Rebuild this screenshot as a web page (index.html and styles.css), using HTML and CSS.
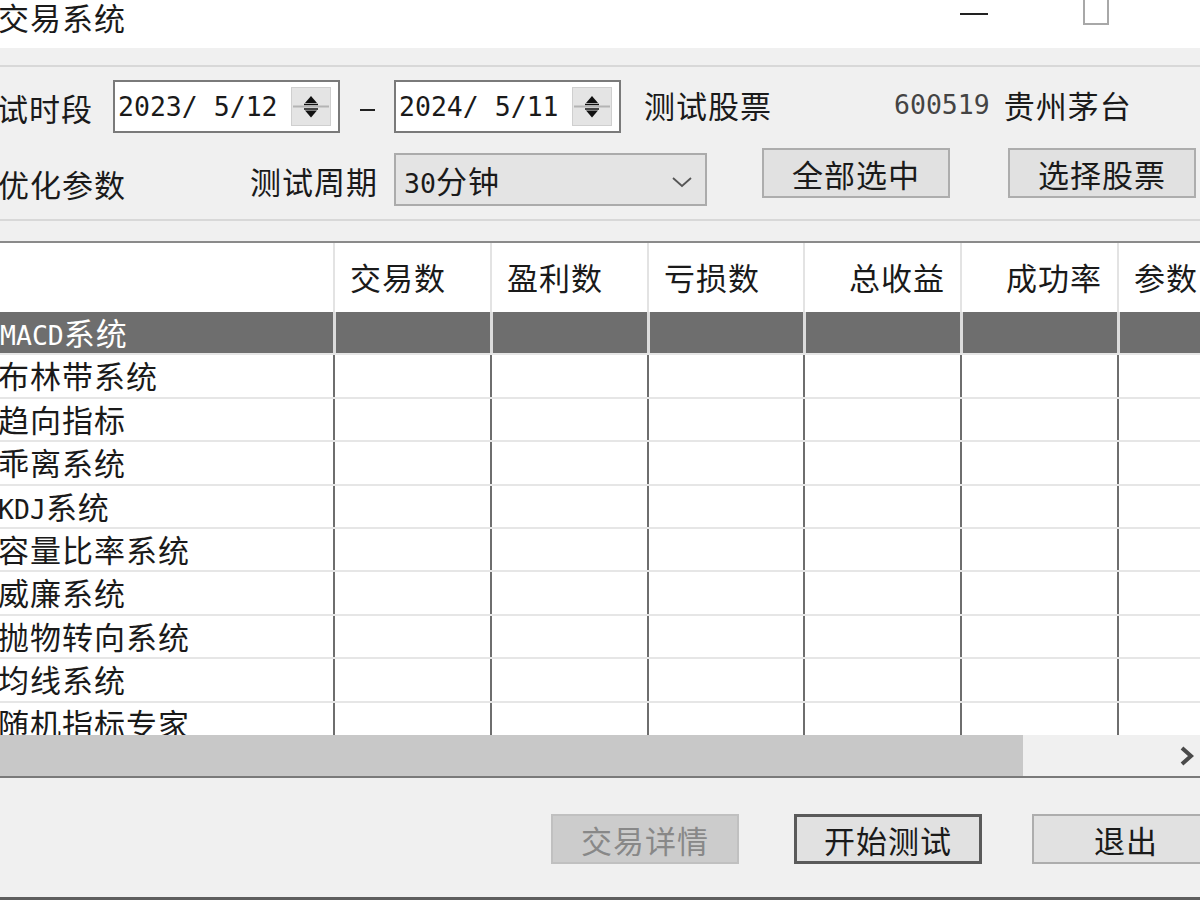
FILE: index.html
```html
<!DOCTYPE html>
<html lang="zh-CN">
<head>
    <meta charset="UTF-8">
    <title>交易系统</title>
    <link rel="stylesheet" href="styles.css">
</head>
<body>
    <div class="window">
        <div class="titlebar">
            <span class="title">交易系统</span>
            <span class="btn-min"></span>
            <span class="btn-max"></span>
        </div>

        <div class="content">
            <!-- settings group -->
            <div class="group">
                <div class="form-row row-dates">
                    <span class="label label-period">测试时段</span>
                    <div class="datebox">
                        <span class="mono">2023/ 5/12</span>
                        <span class="spin">
                            <svg width="38" height="37" viewBox="0 0 38 37">
                                <polygon points="19,8 13,15 25,15" fill="#111"/>
                                <line x1="12" y1="16.5" x2="26" y2="16.5" stroke="#111" stroke-width="1.5"/>
                                <line x1="1" y1="18.5" x2="37" y2="18.5" stroke="#b4b4b4" stroke-width="2"/>
                                <line x1="12" y1="21" x2="26" y2="21" stroke="#111" stroke-width="1.5"/>
                                <polygon points="13,22.5 25,22.5 19,29.5" fill="#111"/>
                            </svg>
                        </span>
                    </div>
                    <span class="dash"></span>
                    <div class="datebox">
                        <span class="mono">2024/ 5/11</span>
                        <span class="spin">
                            <svg width="38" height="37" viewBox="0 0 38 37">
                                <polygon points="19,8 13,15 25,15" fill="#111"/>
                                <line x1="12" y1="16.5" x2="26" y2="16.5" stroke="#111" stroke-width="1.5"/>
                                <line x1="1" y1="18.5" x2="37" y2="18.5" stroke="#b4b4b4" stroke-width="2"/>
                                <line x1="12" y1="21" x2="26" y2="21" stroke="#111" stroke-width="1.5"/>
                                <polygon points="13,22.5 25,22.5 19,29.5" fill="#111"/>
                            </svg>
                        </span>
                    </div>
                    <span class="label label-stock">测试股票</span>
                    <span class="stock"><span class="mono code">600519</span><span class="stock-name">贵州茅台</span></span>
                </div>

                <div class="form-row row-options">
                    <span class="label label-opt">优化参数</span>
                    <span class="label label-cycle">测试周期</span>
                    <div class="combo">
                        <span><span class="mono">30</span>分钟</span>
                        <svg width="22" height="14" viewBox="0 0 22 14">
                            <polyline points="2,3 11,11 20,3" fill="none" stroke="#555" stroke-width="1.8"/>
                        </svg>
                    </div>
                    <button class="btn btn-all">全部选中</button>
                    <button class="btn btn-pick">选择股票</button>
                </div>
            </div>

            <!-- systems list -->
            <div class="list">
                <div class="grid head">
                    <div class="cell first"></div>
                    <div class="cell">交易数</div>
                    <div class="cell">盈利数</div>
                    <div class="cell">亏损数</div>
                    <div class="cell right">总收益</div>
                    <div class="cell right">成功率</div>
                    <div class="cell">参数</div>
                </div>
                <div class="rows" id="rows"></div>
                <div class="hscroll">
                    <div class="thumb"></div>
                    <svg class="arrow" width="18" height="22" viewBox="0 0 18 22">
                        <polyline points="4,3 13,11 4,19" fill="none" stroke="#4a4a4a" stroke-width="4"/>
                    </svg>
                </div>
            </div>

            <div class="actions">
                <button class="btn btn-detail" disabled>交易详情</button>
                <button class="btn btn-start">开始测试</button>
                <button class="btn btn-exit">退出</button>
            </div>
        </div>
    </div>

    <script>
        // trading systems shown in the list
        const systems = [
            '<span class="mono">MACD</span>系统',
            '布林带系统',
            '趋向指标',
            '乖离系统',
            '<span class="mono">KDJ</span>系统',
            '容量比率系统',
            '威廉系统',
            '抛物转向系统',
            '均线系统',
            '随机指标专家'
        ];

        const rowsEl = document.getElementById('rows');

        systems.forEach((name, i) => {
            const row = document.createElement('div');
            row.className = 'grid row' + (i === 0 ? ' sel' : '');
            let html = `<div class="cell first">${name}</div>`;
            for (let c = 0; c < 6; c++) {
                html += '<div class="cell"></div>';
            }
            row.innerHTML = html;
            rowsEl.appendChild(row);
        });
    </script>
</body>
</html>
```

FILE: styles.css
```css
* {
    box-sizing: border-box;
}

body {
    margin: 0;
    width: 1200px;
    height: 900px;
    overflow: hidden;
    background: #f0f0f0;
    font-family: "Noto Sans CJK SC", sans-serif;
    font-size: 31px;
    letter-spacing: 1px;
    color: #1a1a1a;
}

.mono {
    font-family: "DejaVu Sans Mono", monospace;
    font-size: 26.5px;
    letter-spacing: 0;
}

.window {
    width: 1200px;
    height: 900px;
    display: flex;
    flex-direction: column;
    border-bottom: 3px solid #5e5e5e;
}

/* title bar */
.titlebar {
    height: 48px;
    background: #fff;
    display: flex;
    align-items: flex-start;
}

.title {
    margin-left: -2px;
    line-height: 34px;
    width: 962px;
}

.btn-min {
    width: 28px;
    height: 2px;
    margin-top: 13px;
    background: #222;
}

.btn-max {
    width: 26px;
    height: 29px;
    margin-top: -4px;
    margin-left: 95px;
    border: 2px solid #a8a8a8;
}

/* form area */
.content {
    flex: 1;
    display: flex;
    flex-direction: column;
    padding-top: 17px;
}

.group {
    border-top: 2px solid #d8d8d8;
    border-bottom: 2px solid #d8d8d8;
    padding-bottom: 13px;
}

.form-row {
    display: flex;
    align-items: center;
}

.row-dates {
    margin-top: 13px;
    height: 53px;
}

.label {
    white-space: nowrap;
    flex-shrink: 0;
}

.label-period {
    margin-left: -35px;
    width: 148px;
    margin-top: 2px;
}

.datebox {
    width: 227px;
    height: 53px;
    flex-shrink: 0;
    background: #fff;
    border: 2px solid #7a7a7a;
    display: flex;
    align-items: center;
    justify-content: space-between;
    padding: 0 7px 0 3px;
}

.spin {
    width: 40px;
    height: 39px;
    background: #e4e4e4;
    border: 1px solid #cfcfcf;
    display: flex;
}

.dash {
    width: 54px;
    flex-shrink: 0;
    display: flex;
    justify-content: center;
}

.dash::before {
    content: "";
    width: 15px;
    height: 2px;
    margin-top: 6px;
    background: #222;
}

.label-stock {
    margin-left: 23px;
    width: 250px;
    margin-top: -4px;
}

.stock {
    white-space: nowrap;
    margin-top: -4px;
    display: flex;
    align-items: center;
}

.code {
    color: #444;
}

.stock-name {
    margin-left: 14px;
}

.row-options {
    margin-top: 15px;
    height: 58px;
    align-items: flex-start;
}

.label-opt {
    margin-left: -2px;
    width: 252px;
    margin-top: 13px;
}

.label-cycle {
    width: 144px;
    margin-top: 10px;
}

.combo {
    width: 313px;
    height: 53px;
    flex-shrink: 0;
    margin-top: 5px;
    background: #e4e4e4;
    border: 2px solid #ababab;
    display: flex;
    align-items: center;
    justify-content: space-between;
    padding: 0 12px 0 8px;
}

.combo svg {
    margin-top: 4px;
}

.btn {
    font-family: inherit;
    font-size: 31px;
    letter-spacing: 1px;
    color: #1a1a1a;
    width: 188px;
    height: 50px;
    flex-shrink: 0;
    background: #e1e1e1;
    border: 2px solid #adadad;
    padding: 0;
    line-height: 1;
}

.btn-all {
    margin-left: 55px;
}

.btn-pick {
    margin-left: 58px;
}

/* list */
.list {
    margin-top: 20px;
    border-top: 2px solid #8a8a8a;
    border-bottom: 2px solid #7a7a7a;
}

.grid {
    display: grid;
    grid-template-columns: 333px 157px 157px 156px 157px 157px 120px;
    white-space: nowrap;
    overflow: hidden;
}

.head {
    height: 69px;
    background: #fff;
}

.head .cell {
    display: flex;
    align-items: center;
    padding: 0 15px;
    border-left: 2px solid #e3e3e3;
    margin-top: -2px;
}

.head .cell.first {
    border-left: none;
}

.head .cell.right {
    justify-content: flex-end;
}

.rows {
    height: 423px;
    overflow: hidden;
    background: #fff;
}

.row {
    height: 43.4px;
    border-bottom: 2px solid #e6e6e6;
}

.row .cell {
    border-left: 2px solid #6e6e6e;
    line-height: 40px;
}

.row .cell.first {
    border-left: none;
    margin-left: -2px;
}

.row.sel {
    background: #dcdcdc;
    border-bottom-color: #e6e6e6;
}

.row.sel .cell {
    background: #6e6e6e;
    color: #fff;
    border-left: none;
    margin-left: 3px;
}

.row.sel .cell.first {
    margin-left: 0;
    padding-left: 0;
}

.hscroll {
    height: 41px;
    background: #f0f0f0;
    display: flex;
    align-items: center;
    justify-content: space-between;
    padding-right: 4px;
}

.thumb {
    width: 1023px;
    height: 41px;
    background: #c8c8c8;
}

/* bottom buttons */
.actions {
    display: flex;
    margin-top: 36px;
}

.btn-detail {
    margin-left: 551px;
    background: #cccccc;
    border-color: #c0c0c0;
    color: #888;
}

.btn-start {
    margin-left: 55px;
    border: 3px solid #5a5a5a;
}

.btn-exit {
    margin-left: 50px;
}
```
